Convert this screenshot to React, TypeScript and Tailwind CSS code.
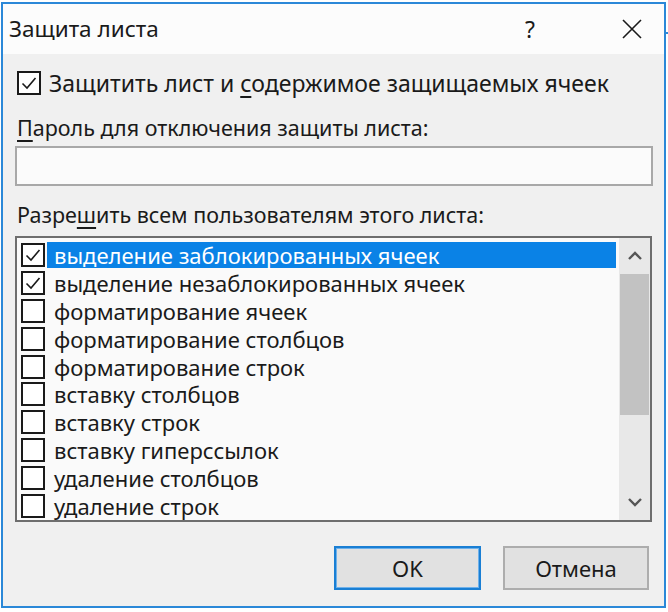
import React from "react";

const items: { label: string; checked: boolean; selected?: boolean }[] = [
  { label: "выделение заблокированных ячеек", checked: true, selected: true },
  { label: "выделение незаблокированных ячеек", checked: true },
  { label: "форматирование ячеек", checked: false },
  { label: "форматирование столбцов", checked: false },
  { label: "форматирование строк", checked: false },
  { label: "вставку столбцов", checked: false },
  { label: "вставку строк", checked: false },
  { label: "вставку гиперссылок", checked: false },
  { label: "удаление столбцов", checked: false },
  { label: "удаление строк", checked: false },
];

function Box({ checked }: { checked: boolean }) {
  return (
    <div className="w-[24px] h-[24px] border-2 border-[#1a1a1a] bg-white flex items-center justify-center shrink-0">
      {checked && (
        <svg width="18" height="18" viewBox="0 0 18 18">
          <path d="M2.5 9.5 L7 14 L15.5 4" fill="none" stroke="#1a1a1a" strokeWidth="1.6" />
        </svg>
      )}
    </div>
  );
}

export default function App() {
  return (
    <div
      className="w-[668px] h-[612px] bg-white relative overflow-hidden text-[#1a1a1a]"
      style={{ fontFamily: '"Noto Sans", "Open Sans", sans-serif' }}
    >
      <div className="absolute left-[666px] top-[32px] w-[2px] h-[2px] bg-[#2b88d8]" />
      <div className="ml-[1px] mt-[2px] w-[665px] h-[606px] border-2 border-[#2b88d8] bg-[#f0f0f0] flex flex-col">
        <div className="h-[50px] bg-[#fcfcfc] flex items-center pl-[6px] shrink-0">
          <span className="text-[22.5px] leading-none">Защита листа</span>
          <div className="ml-auto flex items-center">
            <span className="text-[23px] leading-none mr-[86px]">?</span>
            <svg width="22" height="22" viewBox="0 0 22 22" className="mr-[21px]">
              <path d="M2 2 L20 20 M20 2 L2 20" stroke="#1a1a1a" strokeWidth="1.6" fill="none" />
            </svg>
          </div>
        </div>
        <div className="px-[12px] flex flex-col">
          <div className="flex items-center mt-[17px] ml-[2px] gap-[8px]">
            <Box checked={true} />
            <span className="text-[23px] leading-none">
              Защитить лист и <span className="underline underline-offset-4">с</span>одержимое защищаемых ячеек
            </span>
          </div>
          <div className="text-[21.5px] leading-[23px] mt-[21px] ml-[2px]">
            <span className="underline underline-offset-4">П</span>ароль для отключения защиты листа:
          </div>
          <div className="mt-[7px] h-[40px] w-[638px] border-2 border-[#a8a8a8] bg-[#fbfbfb]" />
          <div className="text-[21.5px] leading-[23px] mt-[17px] ml-[2px]">
            Разре<span className="underline underline-offset-4">ш</span>ить всем пользователям этого листа:
          </div>
          <div className="mt-[10px] h-[286px] w-[637px] border-2 border-[#6e6e6e] bg-[#fafafa] flex">
            <div className="flex-1 flex flex-col pt-[3px] pl-[4px]">
              {items.map((it) => (
                <div key={it.label} className="h-[28px] flex items-center">
                  <Box checked={it.checked} />
                  <div
                    className={
                      "h-[26px] flex items-center pl-[7px] ml-[2px] flex-1 text-[22px] leading-none " +
                      (it.selected ? "bg-[#0a82e6] text-white mr-[3px]" : "")
                    }
                  >
                    {it.label}
                  </div>
                </div>
              ))}
            </div>
            <div className="w-[31px] bg-[#e8e8e8] flex flex-col items-center shrink-0">
              <div className="h-[36px] flex items-center justify-center">
                <svg width="16" height="12" viewBox="0 0 16 12">
                  <path d="M2 9 L8 3 L14 9" stroke="#555" strokeWidth="2.4" fill="none" />
                </svg>
              </div>
              <div className="w-[29px] h-[141px] bg-[#c2c2c2]" />
              <div className="flex-1" />
              <div className="h-[36px] flex items-center justify-center">
                <svg width="16" height="12" viewBox="0 0 16 12">
                  <path d="M2 3 L8 9 L14 3" stroke="#555" strokeWidth="2.4" fill="none" />
                </svg>
              </div>
            </div>
          </div>
          <div className="flex justify-end gap-[22px] mt-[24px] mr-[3px]">
            <div className="w-[147px] h-[44px] border-2 border-[#1a7fd4] bg-[#e1e1e1] flex items-center justify-center">
              <div className="w-full h-full border border-[#6fb1ea] flex items-center justify-center text-[22px]">
                OK
              </div>
            </div>
            <div className="w-[146px] h-[44px] border-2 border-[#adadad] bg-[#e1e1e1] flex items-center justify-center text-[22px]">
              Отмена
            </div>
          </div>
        </div>
      </div>
    </div>
  );
}
